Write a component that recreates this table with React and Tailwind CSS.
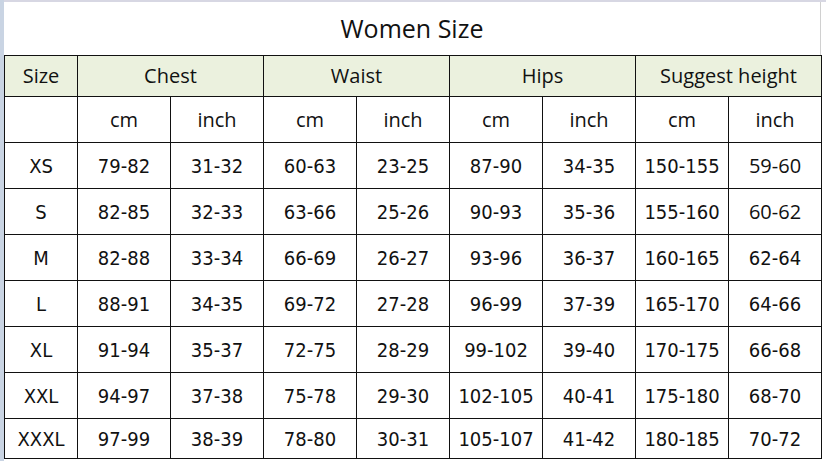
const groups = ['Chest', 'Waist', 'Hips', 'Suggest height']

const rows = [
  ['XS', '79-82', '31-32', '60-63', '23-25', '87-90', '34-35', '150-155', '59-60'],
  ['S', '82-85', '32-33', '63-66', '25-26', '90-93', '35-36', '155-160', '60-62'],
  ['M', '82-88', '33-34', '66-69', '26-27', '93-96', '36-37', '160-165', '62-64'],
  ['L', '88-91', '34-35', '69-72', '27-28', '96-99', '37-39', '165-170', '64-66'],
  ['XL', '91-94', '35-37', '72-75', '28-29', '99-102', '39-40', '170-175', '66-68'],
  ['XXL', '94-97', '37-38', '75-78', '29-30', '102-105', '40-41', '175-180', '68-70'],
  ['XXXL', '97-99', '38-39', '78-80', '30-31', '105-107', '41-42', '180-185', '70-72'],
]

const head = "font-['Open_Sans',sans-serif] text-[20px] text-[#111]"
const data = "font-['DejaVu_Sans_Condensed','DejaVu_Sans',sans-serif] text-[20px] text-[#111]"
const cell = 'flex items-center justify-center border-r border-b border-[#111]'

export default function App() {
  return (
    <div className="flex w-[826px] h-[461px] overflow-hidden bg-white">
      <div className="w-[4px] shrink-0 bg-[#c9d4e3]" />
      <div className="flex flex-col w-[822px]">
        <div className="h-[2px] bg-[#d7d7e3]" />
        <div className="flex h-[53px] w-[817px] items-center justify-center border-r border-[#d0d0d0]">
          <h1 className="font-['Open_Sans',sans-serif] text-[25px] text-[#111] leading-none">Women Size</h1>
        </div>
        <div className="grid w-[818px] grid-cols-[73px_repeat(8,93px)] grid-rows-[41px_46px_repeat(6,46px)_40px] border-l border-t border-[#111]">
          <div className={`${cell} ${head} bg-[#ebf1de]`}>Size</div>
          {groups.map((g) => (
            <div key={g} className={`${cell} ${head} col-span-2 bg-[#ebf1de]`}>{g}</div>
          ))}
          <div className={cell} />
          {groups.map((g) => (
            <div key={g} className="contents">
              <div className={`${cell} ${head}`}>cm</div>
              <div className={`${cell} ${head}`}>inch</div>
            </div>
          ))}
          {rows.map((r, i) =>
            r.map((v, j) => (
              <div
                key={`${i}-${j}`}
                className={`${cell} ${j === 8 && i < 2 ? head : data}`}
              >
                {v}
              </div>
            ))
          )}
        </div>
      </div>
    </div>
  )
}
